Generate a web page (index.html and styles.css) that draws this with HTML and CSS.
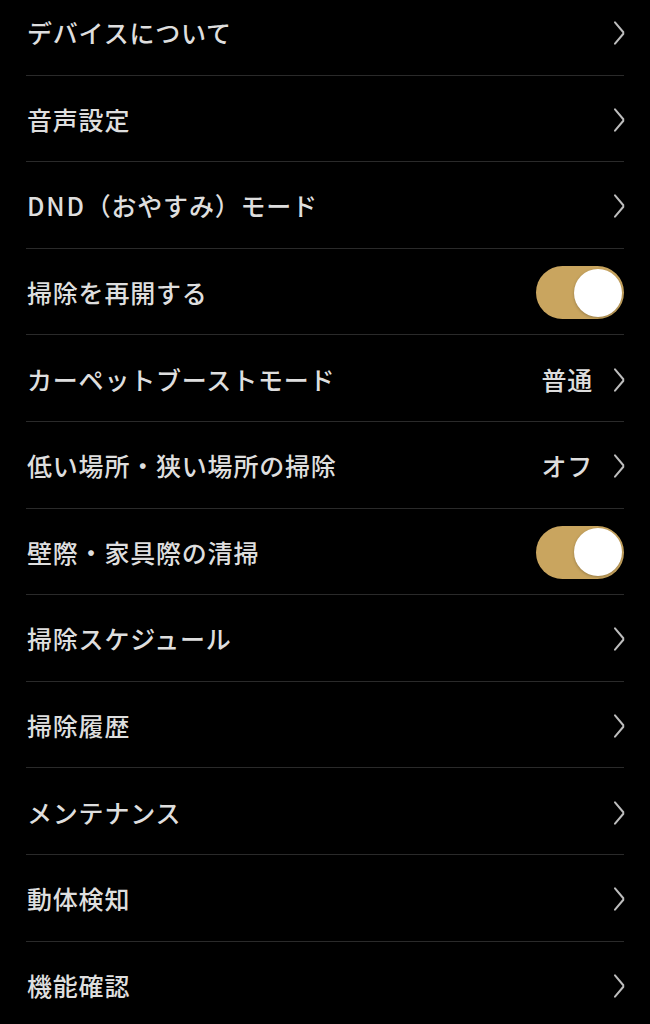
FILE: index.html
```html
<!DOCTYPE html>
<html lang="ja">
<head>
    <meta charset="UTF-8">
    <meta name="viewport" content="width=device-width, initial-scale=1.0">
    <title>設定</title>
    <link rel="stylesheet" href="styles.css">
</head>
<body>
    <ul class="settings">
        <li class="row"><span class="label">デバイスについて</span><span class="chevron"></span></li>
        <li class="row"><span class="label">音声設定</span><span class="chevron"></span></li>
        <li class="row"><span class="label"><span class="latin">DND</span>（おやすみ）モード</span><span class="chevron"></span></li>
        <li class="row"><span class="label">掃除を再開する</span><span class="switch on"><span class="knob"></span></span></li>
        <li class="row"><span class="label">カーペットブーストモード</span><span class="value">普通</span><span class="chevron"></span></li>
        <li class="row"><span class="label">低い場所・狭い場所の掃除</span><span class="value">オフ</span><span class="chevron"></span></li>
        <li class="row"><span class="label">壁際・家具際の清掃</span><span class="switch on"><span class="knob"></span></span></li>
        <li class="row"><span class="label">掃除スケジュール</span><span class="chevron"></span></li>
        <li class="row"><span class="label">掃除履歴</span><span class="chevron"></span></li>
        <li class="row"><span class="label">メンテナンス</span><span class="chevron"></span></li>
        <li class="row"><span class="label">動体検知</span><span class="chevron"></span></li>
        <li class="row"><span class="label">機能確認</span><span class="chevron"></span></li>
    </ul>
</body>
</html>
```

FILE: styles.css
```css
html, body {
    background: #000;
}
body {
    margin: 0;
    font-family: "Noto Sans CJK JP", "Noto Sans", sans-serif;
    color: #dedede;
    overflow: hidden;
}
.settings {
    list-style: none;
    margin: -11px 0 0;
    padding: 0 26px;
}
.row {
    display: flex;
    align-items: center;
    height: 86.6px;
    box-sizing: border-box;
    border-bottom: 1px solid #2a2a2a;
    padding-top: 2px;
}
.label {
    flex: 1;
    font-size: 25px;
    font-weight: 500;
    letter-spacing: 0.8px;
    line-height: 1;
    margin-left: 1px;
}
.latin {
    letter-spacing: 1.8px;
}
.value {
    font-size: 25px;
    font-weight: 500;
    letter-spacing: 0.8px;
    line-height: 1;
    margin-right: 18px;
}
.chevron {
    width: 13px;
    height: 23px;
    position: relative;
}
.chevron::before,
.chevron::after {
    content: "";
    position: absolute;
    right: 0;
    top: 5px;
    width: 15px;
    height: 2px;
    background: #bdbdbd;
    border-radius: 1px;
    transform-origin: right center;
}
.chevron::before {
    transform: translateY(6px) rotate(50deg);
}
.chevron::after {
    transform: translateY(6px) rotate(-50deg);
}
.switch {
    width: 88px;
    height: 53px;
    border-radius: 27px;
    background: #c9a55f;
    display: flex;
    align-items: center;
    box-sizing: border-box;
    padding: 0 2px;
}
.switch.on {
    justify-content: flex-end;
}
.knob {
    width: 48px;
    height: 48px;
    border-radius: 50%;
    background: #fff;
    box-shadow: 0 1px 3px rgba(0, 0, 0, 0.25);
}
```
